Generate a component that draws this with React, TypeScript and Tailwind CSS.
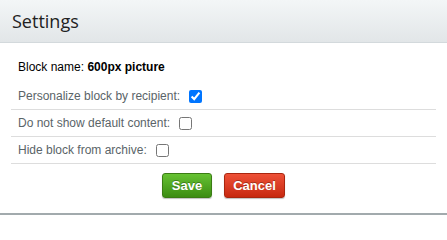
import React from "react";

function Row({ label, checked }: { label: string; checked?: boolean }) {
  return (
    <div className="mx-[11px] flex h-[27px] items-center border-b border-[#dddddd] px-[7px]">
      <span className="text-[12px] leading-none text-[#5a6468]">{label}</span>
      <input
        type="checkbox"
        defaultChecked={checked}
        className="ml-[9px] h-[13px] w-[13px]"
      />
    </div>
  );
}

export default function App() {
  return (
    <div className="w-[447px] bg-white" style={{ fontFamily: '"Liberation Sans", Arial, sans-serif' }}>
      <div className="flex h-[43px] items-center border-b border-[#d3d9dc] bg-gradient-to-b from-[#f3f6f7] to-[#e2e6e8] px-[12px]">
        <h1
          className="text-[18px] leading-none text-[#222]"
          style={{ fontFamily: '"Open Sans", sans-serif' }}
        >
          Settings
        </h1>
      </div>
      <div className="border-b-2 border-[#a2aaad] pt-[11px] pb-[15px]">
        <div className="mx-[11px] flex h-[26px] items-center px-[7px] text-[12px] leading-none text-black">
          <span>
            Block name: <b>600px picture</b>
          </span>
        </div>
        <div className="mt-[3px]">
          <Row label="Personalize block by recipient:" checked />
          <Row label="Do not show default content:" />
          <Row label="Hide block from archive:" />
        </div>
        <div className="mt-[9px] flex justify-center gap-[12px]">
          <button
            className="h-[25px] w-[50px] rounded-[3px] border border-[#3b7c14] bg-gradient-to-b from-[#66c232] to-[#3c8d12] text-[13px] font-bold text-white shadow-[0_1px_1px_rgba(0,0,0,0.25)]"
            style={{ textShadow: "0 -1px 0 rgba(0,0,0,0.3)" }}
          >
            Save
          </button>
          <button
            className="h-[25px] w-[61px] rounded-[3px] border border-[#a9260f] bg-gradient-to-b from-[#ee5036] to-[#c7280e] text-[13px] font-bold text-white shadow-[0_1px_1px_rgba(0,0,0,0.25)]"
            style={{ textShadow: "0 -1px 0 rgba(0,0,0,0.3)" }}
          >
            Cancel
          </button>
        </div>
      </div>
    </div>
  );
}
